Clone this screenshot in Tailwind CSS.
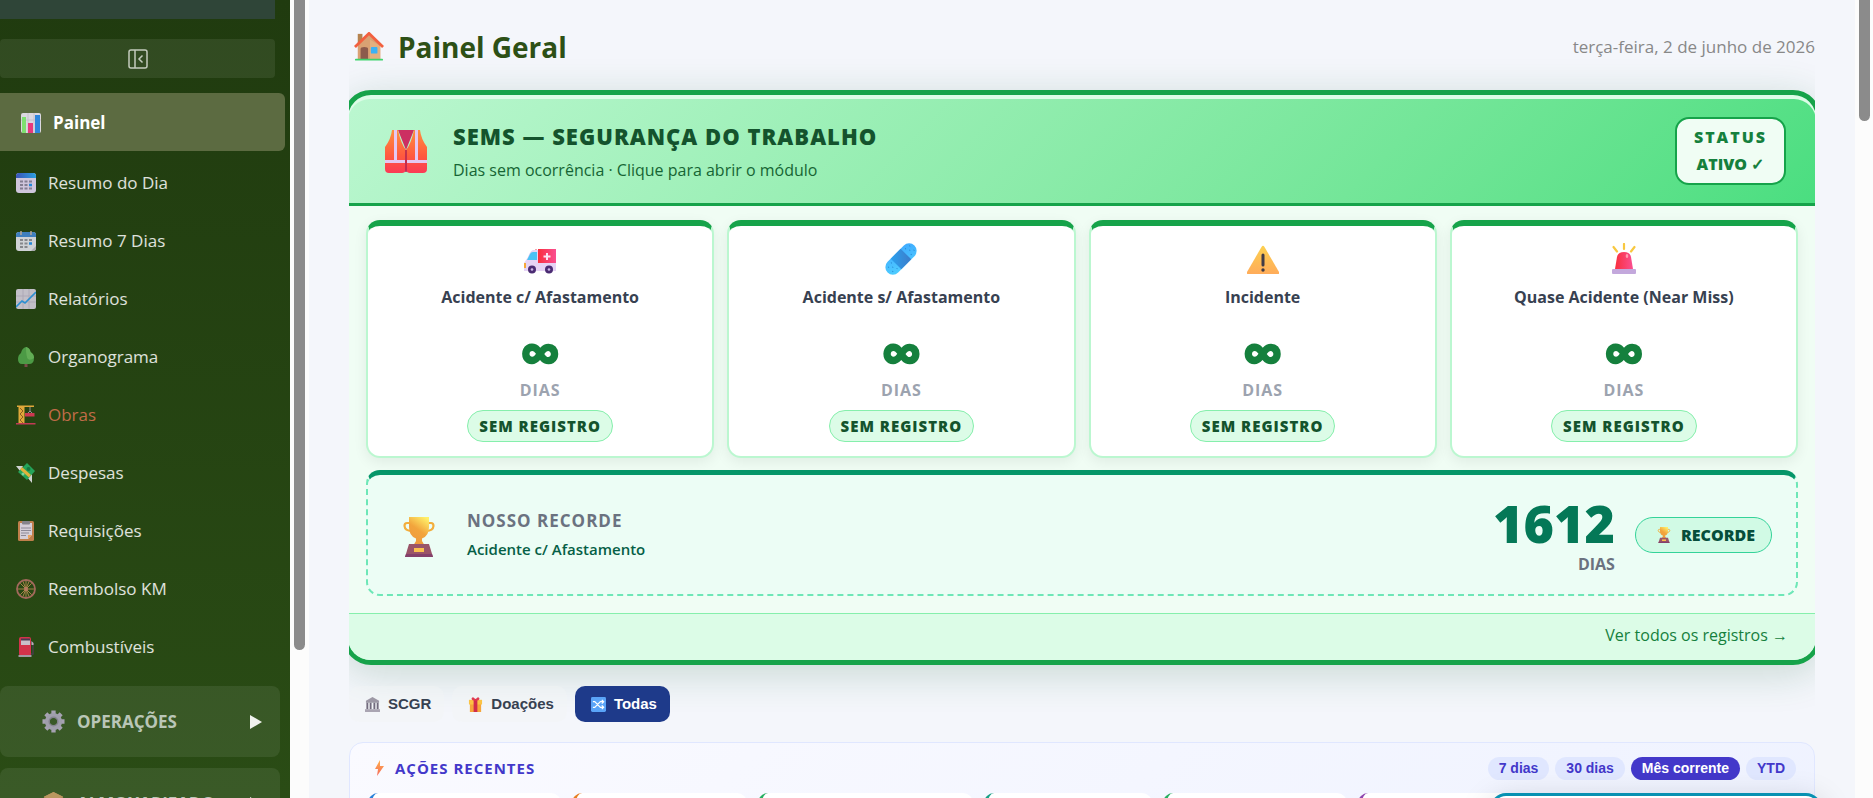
<!DOCTYPE html>
<html lang="pt-BR">
<head>
<meta charset="utf-8">
<title>Painel Geral</title>
<meta name="viewport" content="width=device-width, initial-scale=1">
<script src="https://cdn.jsdelivr.net/npm/@tailwindcss/browser@4"></script>
</head>
<body class="flex h-screen overflow-hidden bg-[#f4f6fb] font-['Open_Sans','Noto_Sans',sans-serif]">

<svg class="absolute size-0" aria-hidden="true">
  <defs>
    <linearGradient id="gold" x1="0.8" y1="0" x2="0.3" y2="1"><stop offset="0" stop-color="#fff06a"/><stop offset=".5" stop-color="#f2a43c"/><stop offset="1" stop-color="#ee9a3e"/></linearGradient>
    <linearGradient id="vest" x1="0" y1="0" x2="0" y2="1"><stop offset="0" stop-color="#ff8f3f"/><stop offset=".6" stop-color="#ff5a3e"/><stop offset="1" stop-color="#fb3a56"/></linearGradient>
    <linearGradient id="blueg" x1="0" y1="1" x2="1" y2="0"><stop offset="0" stop-color="#4fd0ff"/><stop offset="1" stop-color="#3fa9ff"/></linearGradient>
    <linearGradient id="padg" x1="0" y1="0" x2="1" y2="1"><stop offset="0" stop-color="#2aa0ee"/><stop offset="1" stop-color="#3d7cc9"/></linearGradient>
    <linearGradient id="redg" x1="0" y1="0" x2="1" y2="0"><stop offset="0" stop-color="#f92f3d"/><stop offset="1" stop-color="#fa4f91"/></linearGradient>
    <linearGradient id="warng" x1="0" y1="0" x2="0" y2="1"><stop offset="0" stop-color="#fcd04f"/><stop offset="1" stop-color="#ffac5a"/></linearGradient>
    <linearGradient id="boltg" x1="0" y1="0" x2="0" y2="1"><stop offset="0" stop-color="#ffb04a"/><stop offset="1" stop-color="#f5695e"/></linearGradient>
    <linearGradient id="calg" x1="0" y1="0" x2="1" y2="0"><stop offset="0" stop-color="#3b54b8"/><stop offset="1" stop-color="#2aa0e0"/></linearGradient>
    <symbol id="trophy" viewBox="0 0 32 40">
      <path d="M7 6H4Q1.500 6 1.500 9Q2 14 9 14M25 6h3Q30.500 6 30.500 9Q30 14 23 14" fill="none" stroke="#f3ae3b" stroke-width="2.200"/>
      <path d="M6 0h20v10q0 9-7 11.500v2.500q1 3 4 4H9q3-1 4-4v-2.500Q6 19 6 10z" fill="url(#gold)"/>
      <path d="M6 27h20l4 13H2z" fill="#9a5468"/><path d="M3 37h26l1 3H2z" fill="#84406b"/><rect x="11" y="31" width="10" height="4" fill="#fbc04e"/>
    </symbol>
  </defs>
</svg>

<!-- Sidebar -->
<aside class="flex h-full w-[290px] shrink-0 flex-col overflow-hidden bg-linear-to-b from-[#203b0f] to-[#2a4c15] text-white/85">
  <div class="mr-[15px] h-[19px] shrink-0 bg-[#2f4538]"></div>
  <button type="button" aria-label="Recolher menu" class="mt-5 mr-[15px] flex h-[39px] shrink-0 items-center justify-center rounded bg-white/8">
    <svg class="size-5" viewBox="0 0 20 20" fill="none" stroke="#c3ccbd" stroke-width="1.500"><rect x="1" y="1" width="18" height="18" rx="2"/><path d="M7 1v18M14.500 6.500L11 10l3.500 3.500"/></svg>
  </button>
  <nav class="mt-[15px] flex shrink-0 flex-col text-[17px]">
    <a href="#painel" class="mr-[5px] flex h-[58px] items-center gap-3 rounded-r-md bg-[#5c6b41] pt-[2px] pl-[21px] font-bold text-white">
      <svg class="size-5" viewBox="0 0 20 20"><rect width="20" height="20" rx="2" fill="#dcd8e0"/><path d="M7 0v20M13 0v20M0 7h20" stroke="#c1bcc8" stroke-width=".8"/><rect x="1" y="4" width="4" height="16" fill="#7ee070"/><rect x="7" y="10" width="5" height="10" fill="#e8387c"/><rect x="14" y="2" width="5" height="18" fill="#2d86dd"/></svg>Painel</a>
    <a href="#dia" class="mt-[3px] flex h-[58px] items-center gap-3 pl-4">
      <svg class="size-5" viewBox="0 0 20 20"><rect width="20" height="20" rx="3" fill="#cfc6dc"/><path d="M3 0h14q3 0 3 3v2H0V3q0-3 3-3z" fill="url(#calg)"/><path d="M4 8.500h3M8.500 8.500h3M13 8.500h3M4 12h3M8.500 12h3M4 15.500h3M8.500 15.500h3M13 15.500h3" stroke="#847f92" stroke-width="2"/><path d="M13 12h3" stroke="#2589d8" stroke-width="2.500"/></svg>Resumo do Dia</a>
    <a href="#semana" class="flex h-[58px] items-center gap-3 pl-4">
      <svg class="size-5" viewBox="0 0 20 20"><rect y="1" width="20" height="19" rx="3" fill="#cfd2d6"/><path d="M3 1h14q3 0 3 3v2H0V4q0-3 3-3z" fill="#3f7fbe"/><path d="M15 20l5-5v2q0 3-3 3z" fill="#a9a9ad"/><path d="M5 0v4M15 0v4" stroke="#b9a795" stroke-width="1.500"/><path d="M4 9h3M8.500 9h3M13 9h3M4 12.500h3M8.500 12.500h3M4 16h3M8.500 16h3" stroke="#85878c" stroke-width="2"/><path d="M13 12.500h3" stroke="#2589d8" stroke-width="2.500"/></svg>Resumo 7 Dias</a>
    <a href="#relatorios" class="flex h-[58px] items-center gap-3 pl-4">
      <svg class="size-5" viewBox="0 0 20 20"><rect width="20" height="20" rx="2" fill="#c2bfc8"/><path d="M7 0v20M13 0v20M0 7h20M0 13h20" stroke="#a9a5b3" stroke-width=".8"/><path d="M0 18l6-6 3 2L20 3" fill="none" stroke="#2b8fd2" stroke-width="1.600"/></svg>Relatórios</a>
    <a href="#organograma" class="flex h-[58px] items-center gap-3 pl-4">
      <svg class="size-5" viewBox="0 0 20 20"><path d="M8.500 14h3v6h-3z" fill="#7a4a4a"/><path d="M10 0q4 1 4.500 5Q18 7 18 11q0 6-5 6H6q-4 0-4-5 0-4 3-6Q6 1 10 0z" fill="#4c9a45"/><path d="M10 0q4 1 4.500 5Q18 7 18 11q-4 3-6 1T10 0z" fill="#62ad55"/></svg>Organograma</a>
    <a href="#obras" class="flex h-[58px] items-center gap-3 pl-4 text-[#c06c48]">
      <svg class="size-5" viewBox="0 0 20 20"><path d="M1 .5h17V2H1zM2.500 1.500h6V18h-6z" fill="#e0a83a"/><path d="M4 3l3 3-3 3 3 3-3 3 3 3" fill="none" stroke="#8b5e22"/><path d="M14 2v5M12 8l2-2 2 2" fill="none" stroke="#989096"/><path d="M9 8h9.500v3.500H9z" fill="#cc3850"/><path d="M0 18h19.500v1.500H0z" fill="#c23a55"/></svg>Obras</a>
    <a href="#despesas" class="flex h-[58px] items-center gap-3 pl-4">
      <svg class="size-5" viewBox="0 0 20 20"><path d="M0 3h7l-3 5zM11 14l5-3v9z" fill="#cfd2d2"/><path d="M11 0l8 8-8 9-9-8z" fill="#25a45a"/><path d="M6 4l9 8-2 2.500-9-8z" fill="#e2b23b"/><circle cx="12.500" cy="6" r="2" fill="#137a41"/><circle cx="7" cy="11" r="1.500" fill="#7fd19a"/></svg>Despesas</a>
    <a href="#requisicoes" class="flex h-[58px] items-center gap-3 pl-4">
      <svg class="size-5" viewBox="0 0 20 20"><rect x="2" width="16" height="20" rx="1.500" fill="#c07f4b"/><path d="M4 2h12v12l-4 4H4z" fill="#d5cfd9"/><path d="M12 18v-4h4z" fill="#e9a35d"/><rect x="6" width="8" height="3.500" rx="1" fill="#86848c"/><path d="M5 7h10M5 9.500h10M5 12h8M5 14.500h5" stroke="#8d8997"/></svg>Requisições</a>
    <a href="#reembolso" class="flex h-[58px] items-center gap-3 pl-4">
      <svg class="size-5" viewBox="0 0 20 20"><circle cx="10" cy="10" r="9" fill="none" stroke="#a3695c" stroke-width="1.800"/><path d="M10 2v16M2 10h16M4.300 4.300l11.400 11.400M15.700 4.300L4.300 15.700M7 2.600l6 14.800M13 2.600L7 17.400" stroke="#c89355" stroke-width=".8"/><circle cx="10" cy="10" r="2" fill="#b87a62"/></svg>Reembolso KM</a>
    <a href="#combustiveis" class="flex h-[58px] items-center gap-3 pl-4">
      <svg class="size-5" viewBox="0 0 20 20"><path d="M14 4l3 3v10h-3" fill="none" stroke="#434048" stroke-width="1.500"/><path d="M15.500 4l2 2v2h-2z" fill="#b9b2bd"/><rect x="3" width="12" height="19" rx="2" fill="#d3334b"/><path d="M5 2h9v6H5z" fill="#c9bfca"/><path d="M5 1.500h9v2H5z" fill="#4a3b50"/><path d="M2.500 18h13v2h-13z" fill="#a39aa5"/></svg>Combustíveis</a>
  </nav>
  <button type="button" class="mt-[10px] mr-[10px] flex h-[71px] shrink-0 items-center rounded-lg bg-white/8 pr-[18px] pl-[42px] text-[17px] font-bold text-[#b9c6b7]">
    <svg class="mr-3 size-[23px]" viewBox="-12 -12 24 24" fill="none"><path d="M0-11.500V-7M0 7V11.500M-11.500 0H-7M7 0H11.500M-8-8L-5-5M5 5L8 8M8-8L5-5M-5 5L-8 8" stroke="#a6a2b2" stroke-width="4.500"/><circle r="6.500" stroke="#a09fac" stroke-width="5"/><circle r="4.500" stroke="#85848f" stroke-width="1.500"/></svg>
    <span>OPERAÇÕES</span>
    <svg class="ml-auto h-[14px] w-3" viewBox="0 0 12 14"><path d="M0 0l12 7-12 7z" fill="#f0f3ee"/></svg>
  </button>
  <button type="button" class="mt-[11px] mr-[10px] flex h-[71px] shrink-0 items-center rounded-lg bg-white/8 pr-[18px] pl-[42px] text-[17px] font-bold text-[#b9c6b7]">
    <svg class="mr-3 size-[23px]" viewBox="0 0 24 24"><path d="M12 0l10 5v13l-10 5-10-5V5z" fill="#a98555"/><path d="M12 0l10 5-10 5L2 5z" fill="#b9975f"/></svg>
    <span>ALMOXARIFADO</span>
    <svg class="ml-auto h-[14px] w-3" viewBox="0 0 12 14"><path d="M0 0l12 7-12 7z" fill="#f0f3ee"/></svg>
  </button>
</aside>
<div class="flex w-[19px] shrink-0 justify-center bg-[#fcfcfc]"><div class="h-[650px] w-[11px] rounded-b-full bg-[#8b8b8b]"></div></div>

<!-- Content -->
<main class="h-full min-w-0 flex-1 overflow-hidden px-10">
  <div class="overflow-x-clip">
    <header class="flex h-[90px] items-center justify-between pt-1">
      <h1 class="flex items-center gap-[14px] pl-[5px] text-[28px] font-bold text-[#2d5016]">
        <svg class="size-[30px]" viewBox="0 0 32 32"><rect x="4" y="2" width="5" height="10" fill="#b5834f"/><path d="M4 14L16 3l12 11v15H4z" fill="#d9a173"/><path d="M17 29V8l11 7v14z" fill="#e4b07f"/><path d="M1 16L16 1.500 31 16" fill="none" stroke="#f2603f" stroke-width="3"/><path d="M7 29V18q0-2 4-2t4 2v11z" fill="#8c5a4c"/><rect x="18" y="16" width="7" height="7" rx="1" fill="#3bb2f5"/><rect x="1" y="28.500" width="30" height="2" rx="1" fill="#3ed36c"/></svg>
        Painel Geral</h1>
      <time datetime="2026-06-02" class="text-[17px] text-[#888]">terça-feira, 2 de junho de 2026</time>
    </header>

    <section class="-mx-[6px] rounded-[28px] border-[5px] border-[#16a34a] bg-[#dcfce7] pt-1 shadow-[0_8px_40px_rgba(22,101,52,0.2)]">
      <div class="flex items-center rounded-t-[22px] border-b-[3px] border-[#16a34a] bg-linear-135 from-[#bbf7d0] to-[#4ade80] px-[30px] py-[18px] pl-[37px]">
        <svg class="h-[43px] w-[42px]" viewBox="0 0 42 43"><path d="M13 0h16l-8 20z" fill="#cc2f62"/><path d="M7 0h6q3 14 8 20v20q-1 3-4 3H4q-4 0-4-4V17Q6 9 7 0zM35 0h-6q-3 14-8 20v20q1 3 4 3h13q4 0 4-4V17Q36 9 35 0z" fill="url(#vest)"/><path d="M10.500 0v30M31.500 0v30M0 31.500h20M22 31.500h20" stroke="#e4c8f2" stroke-width="3"/><path d="M21 20v22" stroke="#b02252" stroke-width="1.500"/></svg>
        <div class="ml-[26px]">
          <h2 class="text-[22px] leading-[30px] font-extrabold tracking-[1px] text-[#14532d]">SEMS — SEGURANÇA DO TRABALHO</h2>
          <p class="mt-[7px] text-[16px] leading-6 font-medium text-[#166534]">Dias sem ocorrência · Clique para abrir o módulo</p>
        </div>
        <div class="ml-auto rounded-[14px] border-2 border-[#16a34a] bg-[#f0fdf4] px-[17px] py-[5px] text-center text-[16px] leading-[27px] font-extrabold text-[#15803d]"><div class="tracking-[2px]">STATUS</div><div>ATIVO ✓</div></div>
      </div>

      <div class="bg-[#f0fdf4] px-[18px] pt-[14px] pb-[17px]">
        <div class="grid grid-cols-4 gap-[13px]">
          <article class="flex h-[238px] flex-col items-center rounded-[14px] border-2 border-t-[6px] border-[#bbf7d0] border-t-[#16a34a] bg-white pt-[17px] shadow-[0_4px_14px_rgba(0,0,0,0.07)]">
            <svg class="size-8" viewBox="0 0 32 32"><path d="M10 8l2-2 2 2z" fill="#e8506a"/><path d="M15 7H9q-3 1-5 7l-4 6v8h32V20H15z" fill="#e6d3f5"/><path d="M3 17l3-6q1-2 3-2h4v8z" fill="#4bc2f5"/><path d="M14 6h18v14H14z" fill="url(#redg)"/><path d="M23 10v7M19.500 13.500h7" stroke="#fbe6f3" stroke-width="2"/><rect y="20" width="2" height="5" fill="#f6a839"/><circle cx="8" cy="26.500" r="4" fill="#4b2c73"/><circle cx="25" cy="26.500" r="4" fill="#4b2c73"/><circle cx="8" cy="26.500" r="1.300" fill="#cdb8e8"/><circle cx="25" cy="26.500" r="1.300" fill="#cdb8e8"/></svg>
            <h3 class="mt-[10px] text-[16px] leading-6 font-bold text-[#374151]">Acidente c/ Afastamento</h3>
            <strong class="mt-5 text-[60px] leading-[46px] font-extrabold text-[#15803d]">∞</strong>
            <span class="mt-[3px] text-[16px] leading-6 font-bold tracking-[1px] text-[#9ca3af]">DIAS</span>
            <span class="mt-[8px] flex h-8 items-center rounded-full border border-[#86efac] bg-[#dcfce7] px-[11px] text-[15px] font-extrabold tracking-[1px] text-[#14532d]">SEM REGISTRO</span>
          </article>
          <article class="flex h-[238px] flex-col items-center rounded-[14px] border-2 border-t-[6px] border-[#bbf7d0] border-t-[#16a34a] bg-white pt-[17px] shadow-[0_4px_14px_rgba(0,0,0,0.07)]">
            <svg class="size-8" viewBox="0 0 32 32"><g transform="rotate(-45 16 16)"><rect x="-3" y="8.500" width="38" height="15" rx="7.500" fill="url(#blueg)"/><rect x="9" y="8.500" width="14" height="15" fill="url(#padg)"/><path d="M1 13h.8M4 16h.8M1 19h.8M6 12h.8M6 20h.8M26 12h.8M28 16h.8M31 13h.8M31 19h.8M26 20h.8" stroke="#2583cf" stroke-width="1.200"/></g></svg>
            <h3 class="mt-[10px] text-[16px] leading-6 font-bold text-[#374151]">Acidente s/ Afastamento</h3>
            <strong class="mt-5 text-[60px] leading-[46px] font-extrabold text-[#15803d]">∞</strong>
            <span class="mt-[3px] text-[16px] leading-6 font-bold tracking-[1px] text-[#9ca3af]">DIAS</span>
            <span class="mt-[8px] flex h-8 items-center rounded-full border border-[#86efac] bg-[#dcfce7] px-[11px] text-[15px] font-extrabold tracking-[1px] text-[#14532d]">SEM REGISTRO</span>
          </article>
          <article class="flex h-[238px] flex-col items-center rounded-[14px] border-2 border-t-[6px] border-[#bbf7d0] border-t-[#16a34a] bg-white pt-[17px] shadow-[0_4px_14px_rgba(0,0,0,0.07)]">
            <svg class="size-8" viewBox="0 0 32 32"><path d="M14.500 4q1.500-2.500 3 0L32 29q1 2-1 2H1q-2 0-1-2z" fill="url(#warng)"/><path d="M16 12v10" stroke="#403b45" stroke-width="3" stroke-linecap="round"/><circle cx="16" cy="27" r="1.700" fill="#403b45"/></svg>
            <h3 class="mt-[10px] text-[16px] leading-6 font-bold text-[#374151]">Incidente</h3>
            <strong class="mt-5 text-[60px] leading-[46px] font-extrabold text-[#15803d]">∞</strong>
            <span class="mt-[3px] text-[16px] leading-6 font-bold tracking-[1px] text-[#9ca3af]">DIAS</span>
            <span class="mt-[8px] flex h-8 items-center rounded-full border border-[#86efac] bg-[#dcfce7] px-[11px] text-[15px] font-extrabold tracking-[1px] text-[#14532d]">SEM REGISTRO</span>
          </article>
          <article class="flex h-[238px] flex-col items-center rounded-[14px] border-2 border-t-[6px] border-[#bbf7d0] border-t-[#16a34a] bg-white pt-[17px] shadow-[0_4px_14px_rgba(0,0,0,0.07)]">
            <svg class="size-8" viewBox="0 0 32 32"><path d="M16 1v5M5.500 4L9 8.500M26.500 4L23 8.500" stroke="#f8c840" stroke-width="2.200" stroke-linecap="round"/><path d="M7 26L9 14q1-5 7-5t7 5l2 12z" fill="url(#redg)"/><ellipse cx="19" cy="13" rx="1.300" ry="2" fill="#ff9db0"/><rect x="4" y="26" width="24" height="5" rx="1" fill="#c3a8dc"/></svg>
            <h3 class="mt-[10px] text-[16px] leading-6 font-bold text-[#374151]">Quase Acidente (Near Miss)</h3>
            <strong class="mt-5 text-[60px] leading-[46px] font-extrabold text-[#15803d]">∞</strong>
            <span class="mt-[3px] text-[16px] leading-6 font-bold tracking-[1px] text-[#9ca3af]">DIAS</span>
            <span class="mt-[8px] flex h-8 items-center rounded-full border border-[#86efac] bg-[#dcfce7] px-[11px] text-[15px] font-extrabold tracking-[1px] text-[#14532d]">SEM REGISTRO</span>
          </article>
        </div>

        <div class="mt-3 flex h-[126px] items-center rounded-[14px] border-2 border-t-[5px] border-dashed border-[#6ee7b7] border-t-[#059669] bg-[#ecfdf5] pr-6 pl-[35px] [border-top-style:solid]">
          <svg class="mt-1 h-10 w-8"><use href="#trophy"/></svg>
          <div class="ml-8">
            <div class="text-[17px] leading-7 font-bold tracking-[1px] text-[#6b7280]">NOSSO RECORDE</div>
            <div class="text-[15px] leading-7 font-semibold text-[#065f46]">Acidente c/ Afastamento</div>
          </div>
          <div class="mr-5 ml-auto text-right">
            <div class="text-[52px] leading-[58px] font-extrabold text-[#047857]">1612</div>
            <div class="text-[16px] leading-6 font-bold text-[#6b7280]">DIAS</div>
          </div>
          <div class="flex h-9 items-center gap-[10px] rounded-full border border-[#34d399] bg-[#d1fae5] pr-4 pl-[21px] text-[16px] font-extrabold text-[#064e3b]"><svg class="h-4 w-[14px]"><use href="#trophy"/></svg>RECORDE</div>
        </div>
      </div>

      <div class="flex h-[47px] items-center justify-end rounded-b-[22px] border-t border-[#86efac] bg-[#dcfce7] pr-7 pb-1 text-[16px] font-medium text-[#15803d]"><a href="#registros">Ver todos os registros →</a></div>
    </section>

    <div class="mt-[21px] flex gap-2 font-['Liberation_Sans',Arial,sans-serif] text-[15px] font-bold text-[#374151]">
      <button type="button" class="flex h-9 items-center gap-2 rounded-[10px] bg-[#f3f4f6]/40 pr-[13px] pl-4"><svg class="size-[15px]" viewBox="0 0 16 16"><path d="M8 0l7 4v2H1V4z" fill="#9d98a5"/><path d="M2.500 6v7M6 6v7M10 6v7M13.500 6v7" stroke="#726b7d" stroke-width="2"/><path d="M0 13h16v3H0z" fill="#aaa5b2"/></svg>SCGR</button>
      <button type="button" class="flex h-9 items-center gap-2 rounded-[10px] bg-[#f3f4f6]/40 pr-[13px] pl-4"><svg class="size-[15px]" viewBox="0 0 16 16"><path d="M2 6h12v10H2z" fill="#f6a63a"/><path d="M1 3h14v5H1z" fill="#fbc344"/><path d="M6 2h4v14H6z" fill="#d02c4c"/><path d="M8 4Q3 4 4 1q2-2 4 2 2-4 4-2 1 3-4 3z" fill="#e03a50"/></svg>Doações</button>
      <button type="button" class="flex h-9 items-center gap-2 rounded-[10px] bg-[#1e3a8a] pr-[13px] pl-4 text-white"><svg class="size-[15px]" viewBox="0 0 16 16"><rect width="16" height="16" rx="1.500" fill="#5aa4f8"/><path d="M2 5h2l6 6h3M2 11h2l6-6h3M11.500 3l2 2-2 2M11.500 9l2 2-2 2" fill="none" stroke="#fff" stroke-width="1.300"/></svg>Todas</button>
    </div>

    <section class="mt-5 h-[200px] rounded-[14px] border border-[#e0e7ff] bg-linear-135 from-[#fafaff] to-[#eef2ff] pt-[13px] pr-[18px] pl-[18px]">
      <div class="flex h-6 items-center justify-between">
        <h2 class="flex items-center gap-[10px] pl-[5px] text-[15px] font-bold tracking-[1px] text-[#4338ca]"><svg class="h-4 w-3" viewBox="0 0 12 16"><path d="M7 0L2 9h3l-1 7 7-10H7z" fill="url(#boltg)"/></svg>AÇÕES RECENTES</h2>
        <div class="flex gap-[6px] font-['Liberation_Sans',Arial,sans-serif] text-[14px] font-bold text-[#4338ca]">
          <button type="button" class="h-[23px] rounded-full bg-[#e0e7ff] px-[11px]">7 dias</button>
          <button type="button" class="h-[23px] rounded-full bg-[#e0e7ff] px-[11px]">30 dias</button>
          <button type="button" class="h-[23px] rounded-full bg-[#4338ca] px-[11px] text-white">Mês corrente</button>
          <button type="button" class="h-[23px] rounded-full bg-[#e0e7ff] px-[11px]">YTD</button>
        </div>
      </div>
      <div class="mt-[13px] flex gap-[11px]">
        <div class="h-24 w-[193px] rounded-[10px] border-l-4 border-[#2980d9] bg-white"></div>
        <div class="h-24 w-[175px] rounded-[10px] border-l-4 border-[#e67e22] bg-white"></div>
        <div class="h-24 w-[215px] rounded-[10px] border-l-4 border-[#27ae60] bg-white"></div>
        <div class="h-24 w-[168px] rounded-[10px] border-l-4 border-[#16a085] bg-white"></div>
        <div class="h-24 w-[184px] rounded-[10px] border-l-4 border-[#27ae60] bg-white"></div>
        <div class="h-24 flex-1 rounded-[10px] border-l-4 border-[#8e44ad] bg-white"></div>
      </div>
    </section>
  </div>
</main>
<div class="flex w-[18px] shrink-0 justify-center bg-[#fcfcfc]"><div class="h-[121px] w-[11px] rounded-b-full bg-[#8b8b8b]"></div></div>

<!-- Floating panel peeking in at the lower right -->
<div class="fixed right-[51px] -bottom-[75px] h-20 w-[332px] rounded-2xl border-[3px] border-[#0891b2] bg-white shadow-[0_8px_32px_rgba(0,0,0,0.18)]"></div>
</body>
</html>
